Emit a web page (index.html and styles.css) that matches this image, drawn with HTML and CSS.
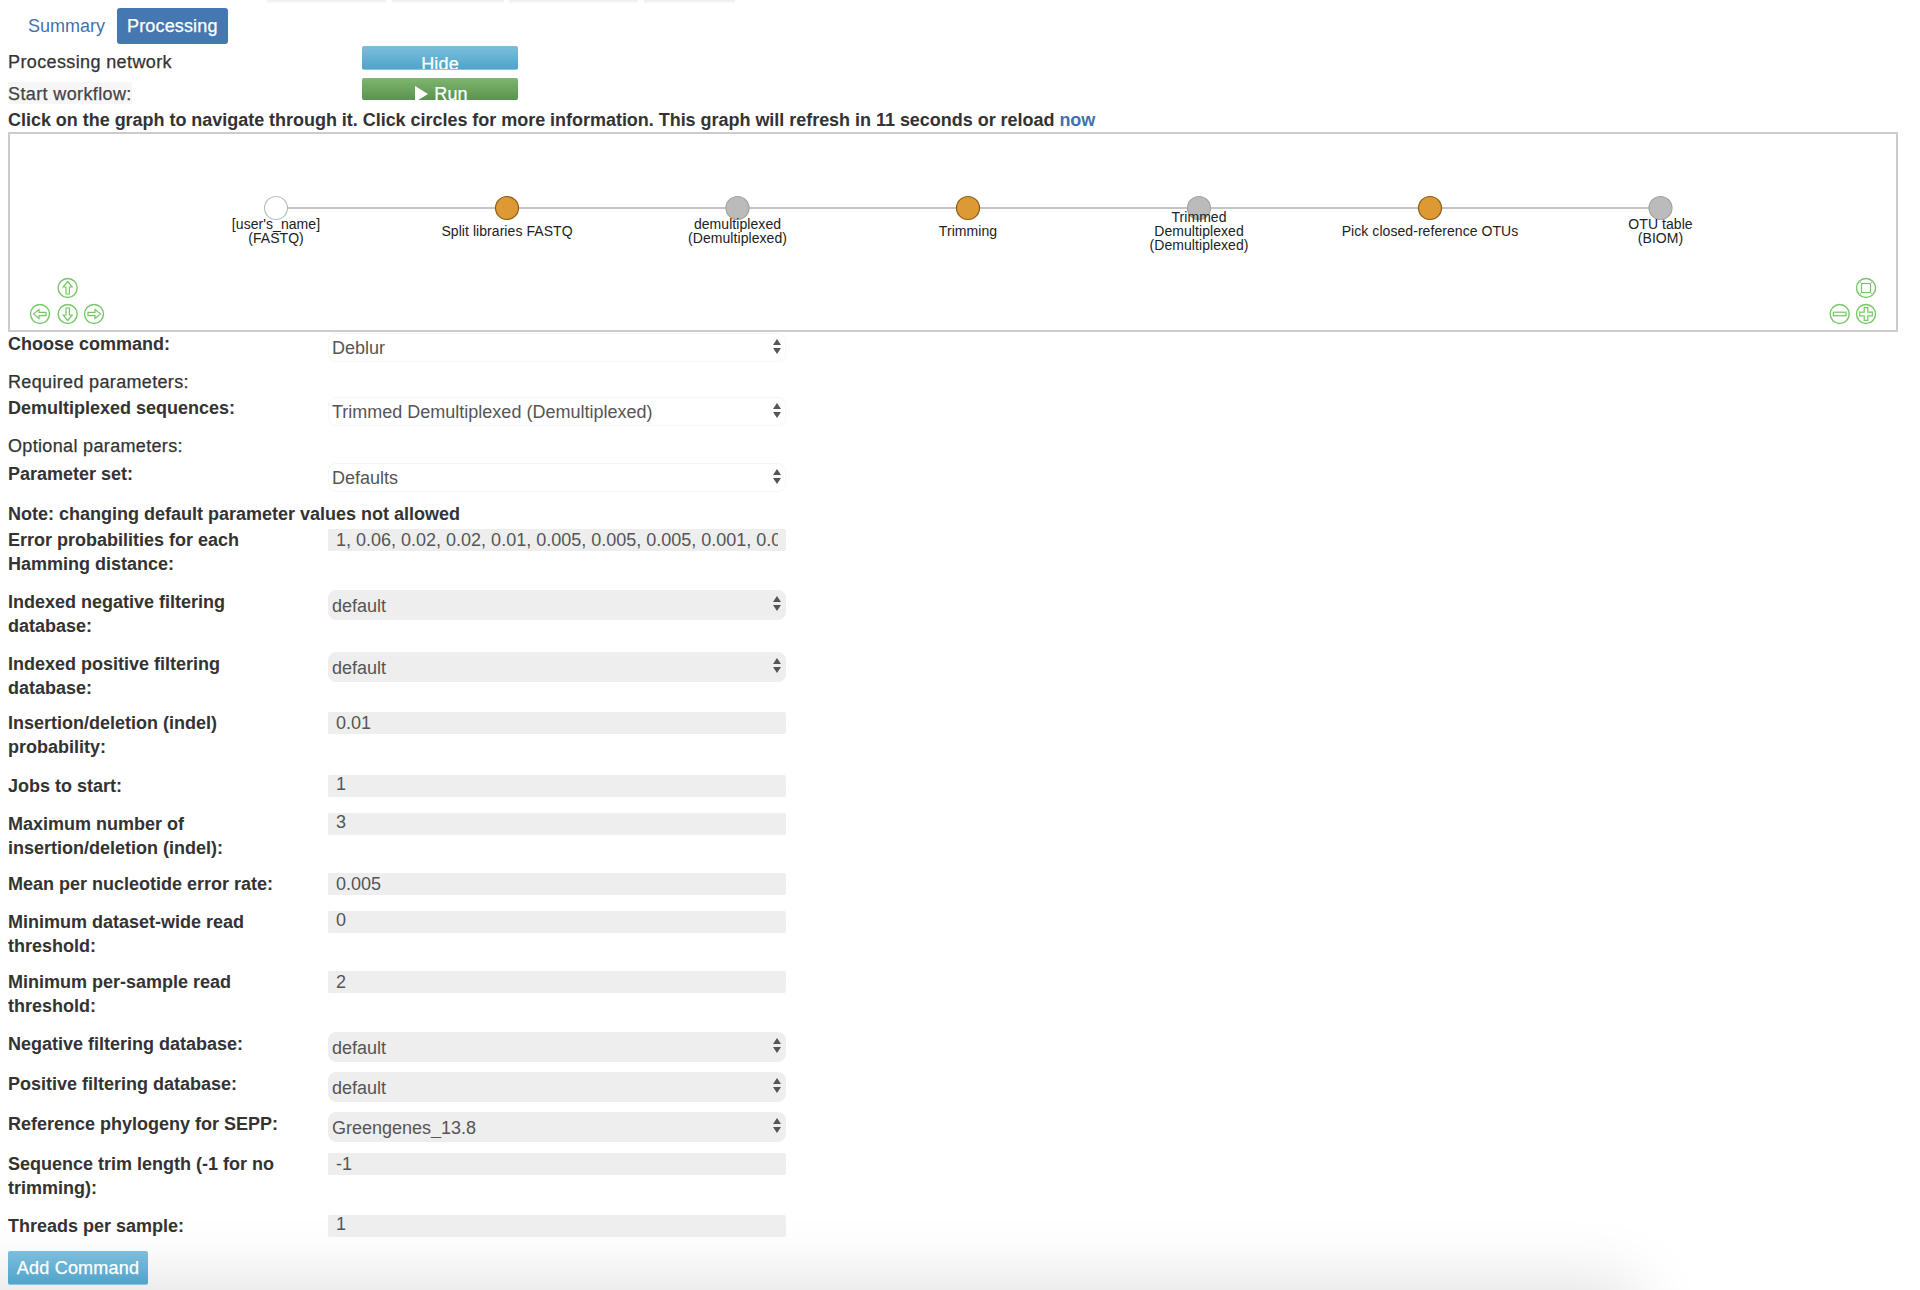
FILE: index.html
```html
<!DOCTYPE html>
<html lang="en">
<head>
    <meta charset="UTF-8">
    <meta name="viewport" content="width=device-width, initial-scale=1.0">
    <title>Processing</title>
    <link rel="stylesheet" href="styles.css">
</head>
<body>
    <div class="bottom-fade"></div>
    <div class="page">
    <div class="top-strip">
        <span class="top-tab tab-a"></span>
        <span class="top-tab tab-b"></span>
        <span class="top-tab tab-c"></span>
        <span class="top-tab tab-d"></span>
    </div>
    <ul class="pills">
        <li class="pill"><a href="#">Summary</a></li>
        <li class="pill active"><a href="#">Processing</a></li>
    </ul>
    <div class="head-row head-first">
        <span class="head-label">Processing network</span>
        <button class="btn btn-info btn-hide">Hide</button>
    </div>
    <div class="head-row head-second">
        <span class="head-label workflow">Start workflow:</span>
        <button class="btn btn-success btn-run"><svg class="play" width="13" height="16" viewBox="0 0 13 16"><path d="M0 0L13 8L0 16Z" fill="#fff"/></svg>Run</button>
    </div>
    <p class="hint">Click on the graph to navigate through it. Click circles for more information. This graph will refresh in 11 seconds or reload <a href="#">now</a></p>

    <div class="graph">
        <svg width="1886" height="196" viewBox="0 0 1886 196">
            <line class="edge" x1="266" y1="74" x2="1650" y2="74"/>

            <circle class="node node-input" cx="266" cy="74" r="11.5"/>
            <circle class="node node-job" cx="497" cy="74" r="11.5"/>
            <circle class="node node-artifact" cx="727.5" cy="74" r="11.5"/>
            <circle class="node node-job" cx="958" cy="74" r="11.5"/>
            <circle class="node node-artifact" cx="1189" cy="74" r="11.5"/>
            <circle class="node node-job" cx="1420" cy="74" r="11.5"/>
            <circle class="node node-artifact" cx="1650.5" cy="74" r="11.5"/>

            <text class="node-label" x="266" y="95">[user's_name]</text>
            <text class="node-label" x="266" y="109">(FASTQ)</text>
            <text class="node-label" x="497" y="102">Split libraries FASTQ</text>
            <text class="node-label" x="727.5" y="95">demultiplexed</text>
            <text class="node-label" x="727.5" y="109">(Demultiplexed)</text>
            <text class="node-label" x="958" y="102">Trimming</text>
            <text class="node-label" x="1189" y="88">Trimmed</text>
            <text class="node-label" x="1189" y="102">Demultiplexed</text>
            <text class="node-label" x="1189" y="116">(Demultiplexed)</text>
            <text class="node-label" x="1420" y="102">Pick closed-reference OTUs</text>
            <text class="node-label" x="1650.5" y="95">OTU table</text>
            <text class="node-label" x="1650.5" y="109">(BIOM)</text>

            <g class="nav-icon" transform="translate(57.7 154)">
                <circle r="9.5"/><path d="M0 -6.5L4.5 -1H1.7V6H-1.7V-1H-4.5Z"/>
            </g>
            <g class="nav-icon" transform="translate(30 180)">
                <circle r="9.5"/><path d="M-6.5 0L-1 -4.5V-1.7H6V1.7H-1V4.5Z"/>
            </g>
            <g class="nav-icon" transform="translate(57.7 180)">
                <circle r="9.5"/><path d="M0 6.5L4.5 1H1.7V-6H-1.7V1H-4.5Z"/>
            </g>
            <g class="nav-icon" transform="translate(84 180)">
                <circle r="9.5"/><path d="M6.5 0L1 -4.5V-1.7H-6V1.7H1V4.5Z"/>
            </g>
            <g class="nav-icon" transform="translate(1856 154)">
                <circle r="9.5"/><rect x="-4.5" y="-4.5" width="9" height="9"/><path class="nav-corner" d="M-6.5 -6.5L-4.5 -4.5M6.5 -6.5L4.5 -4.5M-6.5 6.5L-4.5 4.5M6.5 6.5L4.5 4.5"/>
            </g>
            <g class="nav-icon" transform="translate(1829.7 180)">
                <circle r="9.5"/><rect x="-6.3" y="-1.8" width="12.6" height="3.6"/>
            </g>
            <g class="nav-icon" transform="translate(1856 180)">
                <circle r="9.5"/><path d="M-1.8 -6.3H1.8V-1.8H6.3V1.8H1.8V6.3H-1.8V1.8H-6.3V-1.8H-1.8Z"/>
            </g>
        </svg>
    </div>

    <form class="command-form">
        <div class="row gap-8">
            <label>Choose command:</label>
            <div class="select-box"><select><option>Deblur</option></select></div>
        </div>
        <p class="section-title first-section">Required parameters:</p>
        <div class="row gap-8">
            <label>Demultiplexed sequences:</label>
            <div class="select-box"><select><option>Trimmed Demultiplexed (Demultiplexed)</option></select></div>
        </div>
        <p class="section-title second-section">Optional parameters:</p>
        <div class="row gap-10">
            <label>Parameter set:</label>
            <div class="select-box"><select><option>Defaults</option></select></div>
        </div>
        <p class="note">Note: changing default parameter values not allowed</p>

        <div class="row gap-14">
            <label>Error probabilities for each Hamming distance:</label>
            <input type="text" value="1, 0.06, 0.02, 0.02, 0.01, 0.005, 0.005, 0.005, 0.001, 0.001, 0.001, 0.0005" disabled>
        </div>
        <div class="row gap-14">
            <label>Indexed negative filtering database:</label>
            <div class="select-box off"><select disabled><option>default</option></select></div>
        </div>
        <div class="row gap-11">
            <label>Indexed positive filtering database:</label>
            <div class="select-box off"><select disabled><option>default</option></select></div>
        </div>
        <div class="row gap-15">
            <label>Insertion/deletion (indel) probability:</label>
            <input type="text" value="0.01" disabled>
        </div>
        <div class="row gap-14">
            <label>Jobs to start:</label>
            <input type="text" value="1" class="raised" disabled>
        </div>
        <div class="row gap-12">
            <label>Maximum number of insertion/deletion (indel):</label>
            <input type="text" value="3" class="raised" disabled>
        </div>
        <div class="row gap-14">
            <label>Mean per nucleotide error rate:</label>
            <input type="text" value="0.005" disabled>
        </div>
        <div class="row gap-12">
            <label>Minimum dataset-wide read threshold:</label>
            <input type="text" value="0" class="raised" disabled>
        </div>
        <div class="row gap-14">
            <label>Minimum per-sample read threshold:</label>
            <input type="text" value="2" disabled>
        </div>
        <div class="row gap-10">
            <label>Negative filtering database:</label>
            <div class="select-box off"><select disabled><option>default</option></select></div>
        </div>
        <div class="row gap-10">
            <label>Positive filtering database:</label>
            <div class="select-box off"><select disabled><option>default</option></select></div>
        </div>
        <div class="row gap-10">
            <label>Reference phylogeny for SEPP:</label>
            <div class="select-box off"><select disabled><option>Greengenes_13.8</option></select></div>
        </div>
        <div class="row gap-14">
            <label>Sequence trim length (-1 for no trimming):</label>
            <input type="text" value="-1" disabled>
        </div>
        <div class="row gap-13">
            <label>Threads per sample:</label>
            <input type="text" value="1" class="raised" disabled>
        </div>
        <button type="button" class="btn btn-info btn-add">Add Command</button>
    </form>
    </div>
</body>
</html>
```

FILE: styles.css
```css
html, body {
    height: 100%;
}

body {
    font-family: 'Liberation Sans', Arial, sans-serif;
    font-size: 18px;
    line-height: 24px;
    color: #333;
    margin: 0;
    background-color: #fff;
    overflow: hidden;
    position: relative;
}

.page {
    position: relative;
    padding: 0 22px 0 8px;
}

a {
    color: #3f72ae;
    text-decoration: none;
}

/* remains of the page header cut by the screenshot */
.top-strip {
    height: 2px;
    display: flex;
    margin-left: 259px;
}

.top-tab {
    height: 1px;
    background-color: #f0f0f0;
    box-shadow: 0 1px 2px rgba(0, 0, 0, 0.12);
}

.tab-a { width: 119px; }
.tab-b { width: 112px; margin-left: 6px; }
.tab-c { width: 129px; margin-left: 5px; }
.tab-d { width: 91px; margin-left: 6px; }

.pills {
    list-style: none;
    margin: 6px 0 0 10px;
    padding: 0;
    display: flex;
    gap: 2px;
    height: 36px;
}

.pill a {
    display: block;
    padding: 6px 10px;
    line-height: 24px;
    border-radius: 3px;
    box-shadow: 0 0 1px #e8ecf4;
}

.pill.active a {
    background-color: #4577b1;
    color: #fff;
    letter-spacing: 0.15px;
    -webkit-text-stroke: 0.25px #fff;
}

.head-row {
    display: grid;
    grid-template-columns: 354px 156px;
    align-items: start;
}

.head-first {
    margin-top: 2px;
    height: 32px;
}

.head-second {
    height: 22px;
}

.head-label {
    justify-self: start;
    line-height: 24px;
    margin-top: 4px;
    letter-spacing: 0.38px;
    -webkit-text-stroke: 0.25px #333;
}

.head-label.workflow {
    color: #444;
    -webkit-text-stroke-color: #444;
    background-color: #f6f6f6;
    line-height: 20px;
    padding-top: 2px;
}

.btn {
    display: block;
    border: none;
    color: #fff;
    font-family: inherit;
    font-size: 18px;
    line-height: 24px;
    border-radius: 2px;
    padding: 0;
    overflow: hidden;
    letter-spacing: 0.15px;
    -webkit-text-stroke: 0.25px #fff;
}

.btn-info {
    background-image: linear-gradient(to bottom, #7dbedd, #50a4cb);
    border-bottom: 1px solid #8cc4de;
}

.btn-success {
    background-image: linear-gradient(to bottom, #7fb66f, #58934f);
}

.btn-hide {
    width: 156px;
    height: 24px;
    padding-top: 6px;
    box-sizing: border-box;
}

.btn-run {
    width: 156px;
    height: 22px;
    padding: 4px 0 0 3px;
    box-sizing: border-box;
}

.play {
    margin-right: 6px;
    vertical-align: -2px;
}

.hint {
    margin: 8px 0 0 0;
    height: 24px;
    font-weight: bold;
    letter-spacing: -0.03px;
}

.graph {
    margin-top: 0;
    width: 1886px;
    height: 196px;
    border: 2px solid #ccc;
}

.edge {
    stroke: #8a8a8a;
    stroke-width: 1.2;
}

.node {
    stroke-width: 1.2;
}

.node-input {
    fill: #fff;
    stroke: #bdbdbd;
}

.node-job {
    fill: #dd9933;
    stroke: #8a5d17;
}

.node-artifact {
    fill: #bbb;
    stroke: #a3a3a3;
}

.node-label {
    font-family: 'Liberation Sans', Arial, sans-serif;
    font-size: 14px;
    letter-spacing: 0.06px;
    fill: #222;
    text-anchor: middle;
}

.nav-icon circle {
    fill: #fff;
    stroke: #76c765;
    stroke-width: 1.4;
}

.nav-icon path, .nav-icon rect {
    fill: #fff;
    stroke: #76c765;
    stroke-width: 1.2;
}

.nav-icon .nav-corner {
    stroke: #b5b5b5;
    stroke-width: 1;
}

.row {
    display: grid;
    grid-template-columns: 320px 458px;
    align-items: start;
    min-height: 24px;
}

.row label {
    display: block;
    font-weight: bold;
    padding-right: 30px;
}

.gap-8 { margin-bottom: 8px; }
.gap-10 { margin-bottom: 10px; }
.gap-11 { margin-bottom: 11px; }
.gap-12 { margin-bottom: 12px; }
.gap-13 { margin-bottom: 13px; }
.gap-14 { margin-bottom: 14px; }
.gap-15 { margin-bottom: 15px; }

.section-title {
    margin: 0;
    height: 24px;
    letter-spacing: 0.34px;
    -webkit-text-stroke: 0.25px #333;
}

.first-section { margin-bottom: 2px; }
.second-section { margin-bottom: 4px; }

.note {
    margin: 0 0 2px 0;
    font-weight: bold;
}

.row input {
    display: block;
    box-sizing: border-box;
    width: 458px;
    height: 22px;
    margin-top: 1px;
    padding: 0 8px;
    border: none;
    border-radius: 2px;
    background-color: #eee;
    color: #555;
    font-family: inherit;
    font-size: 18px;
    opacity: 1;
}

.row input.raised {
    padding-bottom: 3px;
}

.select-box {
    position: relative;
    height: 29px;
    margin-top: 1px;
    border: 1px solid #f6f6f6;
    border-radius: 8px;
    box-sizing: border-box;
    background-color: #fff;
}

.select-box.off {
    background-color: #eee;
    border-color: #eee;
    height: 30px;
    margin-top: 0;
}

.select-box::before, .select-box::after {
    content: "";
    position: absolute;
    right: 4px;
    width: 0;
    height: 0;
    border-left: 4px solid transparent;
    border-right: 4px solid transparent;
}

.select-box::before {
    top: 5px;
    border-bottom: 6px solid #555;
}

.select-box::after {
    top: 14px;
    border-top: 6px solid #555;
}

.select-box select {
    appearance: none;
    -webkit-appearance: none;
    display: block;
    width: 100%;
    height: 100%;
    padding: 0 24px 0 3px;
    border: none;
    background: transparent;
    color: #555;
    font-family: inherit;
    font-size: 18px;
    opacity: 1;
}

.select-box.off select {
    padding-top: 2px;
}

.btn-add {
    width: 140px;
    height: 34px;
    letter-spacing: 0.22px;
}

/* shadow of the footer sitting just below the fold */
.bottom-fade {
    position: absolute;
    left: 0;
    right: 0;
    bottom: 0;
    height: 110px;
    overflow: hidden;
}

.bottom-fade::after {
    content: "";
    position: absolute;
    left: -200px;
    top: 110px;
    width: 1830px;
    height: 200px;
    box-shadow: 0 0 70px 5px #dedede;
}
```
